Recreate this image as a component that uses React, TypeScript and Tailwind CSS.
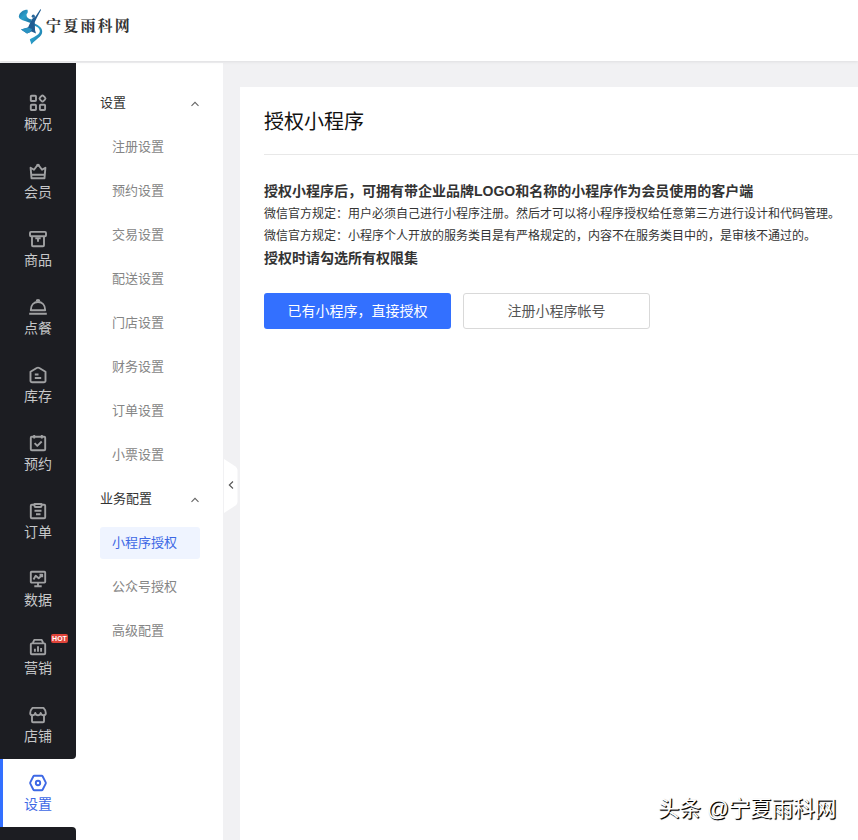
import { ReactNode, useState } from 'react'

interface INavItem {
    id: string
    label: string
    icon: ReactNode
    hot?: boolean
}

interface IMenuGroup {
    title: string
    items: string[]
}

const navItems: INavItem[] = [
    {
        id: 'overview',
        label: '概况',
        icon: (
            <>
                <rect x="2.8" y="2.8" width="5.2" height="5.2" rx="0.8" />
                <rect x="12" y="3" width="5" height="5" rx="1.6" transform="rotate(45 14.5 5.5)" />
                <rect x="2.8" y="11.8" width="5.2" height="5.2" rx="0.8" />
                <rect x="11.9" y="11.8" width="5.2" height="5.2" rx="0.8" />
            </>
        )
    },
    {
        id: 'members',
        label: '会员',
        icon: (
            <>
                <path d="M2.6 6.7 L6 8.8 L9 4.7 H11 L14 8.8 L17.4 6.7 L16.5 17.2 H3.5 Z" />
                <path d="M9 4.6 a1 1 0 0 1 2 0 M4 13.8 H16" />
            </>
        )
    },
    {
        id: 'goods',
        label: '商品',
        icon: (
            <>
                <rect x="2" y="2.9" width="16" height="4.3" rx="1" />
                <path d="M4 7.2 V16.2 a1 1 0 0 0 1 1 H15 a1 1 0 0 0 1 -1 V7.2 M7.3 9.2 H12.7 M10 9.2 V12.8" />
            </>
        )
    },
    {
        id: 'dining',
        label: '点餐',
        icon: (
            <>
                <path d="M2.8 13.2 C2.8 8 6 5 10 5 C14 5 17.2 8 17.2 13.2 Z" />
                <path d="M8.6 4.4 a1.4 1.4 0 0 1 2.8 0 M1.2 16.8 H18.8" />
            </>
        )
    },
    {
        id: 'stock',
        label: '库存',
        icon: (
            <>
                <path d="M2.5 6.8 L8.7 3 Q10 2.3 11.3 3 L17.5 6.8 V15.7 a1.6 1.6 0 0 1 -1.6 1.6 H4.1 a1.6 1.6 0 0 1 -1.6 -1.6 Z" />
                <path d="M6.8 9.5 H10.5 M6.8 13 H13.2" />
            </>
        )
    },
    {
        id: 'booking',
        label: '预约',
        icon: (
            <>
                <rect x="2.8" y="3.8" width="14.4" height="13.5" rx="1" />
                <path d="M6.2 2 V5.5 M13.8 2 V5.5 M6.6 10.2 L9.3 12.9 L13.7 8.5" />
            </>
        )
    },
    {
        id: 'orders',
        label: '订单',
        icon: (
            <>
                <path d="M6.3 3.8 H3.8 a1 1 0 0 0 -1 1 V16.3 a1 1 0 0 0 1 1 H16.2 a1 1 0 0 0 1 -1 V4.8 a1 1 0 0 0 -1 -1 H13.7" />
                <path d="M6.5 3 H13.5 V5 Q13.5 6 12.5 6 H7.5 Q6.5 6 6.5 5 Z M6.5 9.7 H13.5 M8 13.2 H12.5" />
            </>
        )
    },
    {
        id: 'data',
        label: '数据',
        icon: (
            <>
                <rect x="2.8" y="2.8" width="14.4" height="10.8" rx="0.8" />
                <path d="M5.5 10.5 L7.7 6.7 L10.7 9.3 L14 6 M11.5 5.8 H14.2 V8.3 M10 13.6 V17 M6.3 17.2 H13.7" />
            </>
        )
    },
    {
        id: 'marketing',
        label: '营销',
        hot: true,
        icon: (
            <>
                <rect x="2.8" y="6.4" width="14.4" height="10.9" rx="1" />
                <path d="M4.8 6 L6.3 2.9 H13.7 L15.2 6 M6.9 11.8 V14.7 M10 9.3 V14.7 M13.1 11 V14.7" />
            </>
        )
    },
    {
        id: 'store',
        label: '店铺',
        icon: (
            <>
                <path d="M4.5 2.9 H15.5 Q17.8 5.2 17.8 8.2 Q17.8 10.3 15.5 10.3 Q13.3 10.3 12.7 8 Q12.1 10.3 10 10.3 Q7.9 10.3 7.3 8 Q6.7 10.3 4.5 10.3 Q2.2 10.3 2.2 8.2 Q2.2 5.2 4.5 2.9 Z" />
                <path d="M4 10.5 V16.2 a1 1 0 0 0 1 1 H15 a1 1 0 0 0 1 -1 V10.5" />
            </>
        )
    },
    {
        id: 'settings',
        label: '设置',
        icon: (
            <>
                <path d="M6.3 2.8 H13.7 Q14.3 2.8 14.6 3.3 L17.7 9.4 Q18 10 17.7 10.6 L14.6 16.7 Q14.3 17.2 13.7 17.2 H6.3 Q5.7 17.2 5.4 16.7 L2.3 10.6 Q2 10 2.3 9.4 L5.4 3.3 Q5.7 2.8 6.3 2.8 Z" />
                <circle cx="10" cy="10" r="2.2" />
            </>
        )
    }
]

const menuGroups: IMenuGroup[] = [
    {
        title: '设置',
        items: [
            '注册设置',
            '预约设置',
            '交易设置',
            '配送设置',
            '门店设置',
            '财务设置',
            '订单设置',
            '小票设置'
        ]
    },
    {
        title: '业务配置',
        items: ['小程序授权', '公众号授权', '高级配置']
    }
]

function Logo() {
    return (
        <svg width="26" height="38" viewBox="0 0 26 38">
            <defs>
                <linearGradient id="ribbon" x1="0" y1="0" x2="1" y2="1">
                    <stop offset="0" stopColor="#1d6f9f" />
                    <stop offset="0.45" stopColor="#2a9fcb" />
                    <stop offset="1" stopColor="#1a6f9c" />
                </linearGradient>
            </defs>
            <path
                d="M9.5 1.8 C5 1.8 1.2 4.5 0.8 8.8 C1.2 11 3.5 12 7 13 L12.5 15 L14 11.5 C10.5 11 8.5 9.5 8.5 7 C8.5 5.5 10.5 5.5 9.5 1.8 Z"
                fill="url(#ribbon)"
            />
            <path
                d="M16.5 15.5 C21 17.3 24.5 20 24.2 24 C24 29 17.5 31 13.5 36.5 L11.8 31.5 C14 29.5 21 27.5 21.8 23.5 C22 20.5 19 18.5 16 17.5 Z"
                fill="url(#ribbon)"
            />
            <path
                d="M22.5 1 L23 2 L19 9.5 L16.8 14 L17 22 L18 25.5 L13.5 23.5 L9 25.5 L3 21.5 L10 19.5 L12.3 14.5 L14.5 10.5 L17.5 8.5 Z"
                fill="#1f5c92"
            />
            <path d="M3 21.5 L10 19.5 L14 21 L12.5 24 L9 25.5 Z" fill="#2a93c2" />
            <circle cx="15.3" cy="8.2" r="1.6" fill="#27679a" />
        </svg>
    )
}

function Header() {
    return (
        <header className="relative z-10 flex h-[61px] shrink-0 items-start bg-white pl-[18px] pt-[8px] shadow-[0_1px_3px_rgba(0,0,0,0.08)]">
            <Logo />
            <span className="ml-[2px] mt-[6px] font-['Noto_Serif_CJK_SC','Noto_Sans_CJK_SC',serif] text-[15px] font-bold leading-[22px] tracking-[2.2px] text-[#333333]">
                宁夏雨科网
            </span>
        </header>
    )
}

function NavButton({
    item,
    active,
    onClick
}: {
    item: INavItem
    active: boolean
    onClick: () => void
}) {
    return (
        <button
            className={`relative flex h-[68px] w-[76px] shrink-0 flex-col items-center pt-[14px] ${
                active
                    ? 'border-l-[3px] border-[#3370ff] bg-white pr-[3px] text-[#3d68e5]'
                    : 'bg-[#1c1d22] text-[#c6c7c9]'
            }`}
            type="button"
            onClick={onClick}
        >
            <svg
                className={`shrink-0 ${active ? 'text-[#3d68e5]' : 'text-[#a0a1a3]'}`}
                width="20"
                height="20"
                viewBox="0 0 20 20"
                fill="none"
                stroke="currentColor"
                strokeWidth="1.9"
                strokeLinejoin="round"
            >
                {item.icon}
            </svg>
            <span className="mt-px text-sm leading-5">{item.label}</span>
            {item.hot && (
                <span className="absolute left-[51px] top-[11px] flex h-[9px] w-[17px] items-center justify-center rounded-[2px] bg-[#e0443a] text-[7px] font-bold leading-none text-white">
                    HOT
                </span>
            )}
        </button>
    )
}

function Chevron() {
    return (
        <svg
            className="mt-px"
            width="10"
            height="10"
            viewBox="0 0 10 10"
            fill="none"
            stroke="#666666"
            strokeWidth="1.1"
        >
            <path d="M1.5 6.8 L5 3.3 L8.5 6.8" />
        </svg>
    )
}

export default function App() {
    const [activeNav, setActiveNav] = useState<string>('settings')
    const [activeItem, setActiveItem] = useState<string>('小程序授权')
    const [closed, setClosed] = useState<string[]>([])

    function toggleGroup(title: string) {
        setClosed(prev =>
            prev.includes(title)
                ? prev.filter(name => name !== title)
                : [...prev, title]
        )
    }

    return (
        <div className="relative flex h-[840px] w-[858px] flex-col overflow-hidden bg-[#f1f1f3] font-['Liberation_Sans','Noto_Sans_CJK_SC',sans-serif]">
            <Header />
            <div className="flex min-h-0 flex-1 pt-[2px]">
                <nav className="flex w-[76px] shrink-0 flex-col overflow-hidden bg-white">
                    <div className="h-4 shrink-0 bg-[#1c1d22]" />
                    <div className="flex shrink-0 flex-col overflow-hidden rounded-br-[4px]">
                        {navItems.slice(0, -1).map(item => (
                            <NavButton
                                key={item.id}
                                item={item}
                                active={activeNav === item.id}
                                onClick={() => setActiveNav(item.id)}
                            />
                        ))}
                    </div>
                    <NavButton
                        item={navItems[navItems.length - 1]}
                        active={activeNav === 'settings'}
                        onClick={() => setActiveNav('settings')}
                    />
                    <div className="flex-1 rounded-tr-[4px] bg-[#1c1d22]" />
                </nav>

                <aside className="relative w-[147px] shrink-0 bg-white pl-6 pt-[18px]">
                    {menuGroups.map(({ title, items }) => (
                        <div key={title} className="w-[100px]">
                            <button
                                className="flex h-11 w-full items-center justify-between text-[13px] text-[#333333]"
                                type="button"
                                onClick={() => toggleGroup(title)}
                            >
                                {title}
                                <Chevron />
                            </button>
                            {!closed.includes(title) && (
                                <div className="flex flex-col gap-3 py-1.5">
                                    {items.map(name => (
                                        <button
                                            key={name}
                                            className={`flex h-8 w-full items-center rounded-[3px] pl-3 text-[13px] ${
                                                activeItem === name
                                                    ? 'bg-[#eff4ff] text-[#3d68e5]'
                                                    : 'text-[#858585]'
                                            }`}
                                            type="button"
                                            onClick={() => setActiveItem(name)}
                                        >
                                            {name}
                                        </button>
                                    ))}
                                </div>
                            )}
                        </div>
                    ))}
                    <button
                        className="absolute left-[148px] top-[396px] h-[54px] w-[14px]"
                        type="button"
                    >
                        <svg width="14" height="54" viewBox="0 0 14 54" fill="none">
                            <path d="M0 0 L11.5 7.5 Q13.5 9 13.5 11 V43 Q13.5 45 11.5 46.5 L0 54 Z" fill="#ffffff" />
                            <path d="M9 22.5 L5.3 26 L9 29.5" stroke="#555555" strokeWidth="1.1" />
                        </svg>
                    </button>
                </aside>

                <main className="ml-[17px] mt-6 flex-1 bg-white pl-6">
                    <h1 className="h-[68px] border-b border-[#e8e8e8] pt-5 text-xl leading-[30px] text-[#111111]">
                        授权小程序
                    </h1>
                    <div className="mt-[25px] whitespace-nowrap text-xs leading-[22px] text-[#333333]">
                        <p className="text-sm font-bold leading-[22px]">
                            授权小程序后，可拥有带企业品牌LOGO和名称的小程序作为会员使用的客户端
                        </p>
                        <p className="pt-px">
                            微信官方规定：用户必须自己进行小程序注册。然后才可以将小程序授权给任意第三方进行设计和代码管理。
                        </p>
                        <p>
                            微信官方规定：小程序个人开放的服务类目是有严格规定的，内容不在服务类目中的，是审核不通过的。
                        </p>
                        <p className="text-sm font-bold leading-[22px]">
                            授权时请勾选所有权限集
                        </p>
                    </div>
                    <div className="mt-6 flex gap-3 text-sm">
                        <button
                            className="h-9 w-[187px] rounded-[3px] bg-[#3370ff] text-white"
                            type="button"
                        >
                            已有小程序，直接授权
                        </button>
                        <button
                            className="h-9 w-[187px] rounded-[3px] border border-[#d9d9d9] bg-white text-[#555555]"
                            type="button"
                        >
                            注册小程序帐号
                        </button>
                    </div>
                </main>
            </div>

            <div className="absolute left-[658px] top-[794px] whitespace-nowrap text-[21.5px] leading-[30px] text-white [text-shadow:1px_1px_1px_#000,1px_1px_0_#222]">
                头条 @宁夏雨科网
            </div>
        </div>
    )
}
